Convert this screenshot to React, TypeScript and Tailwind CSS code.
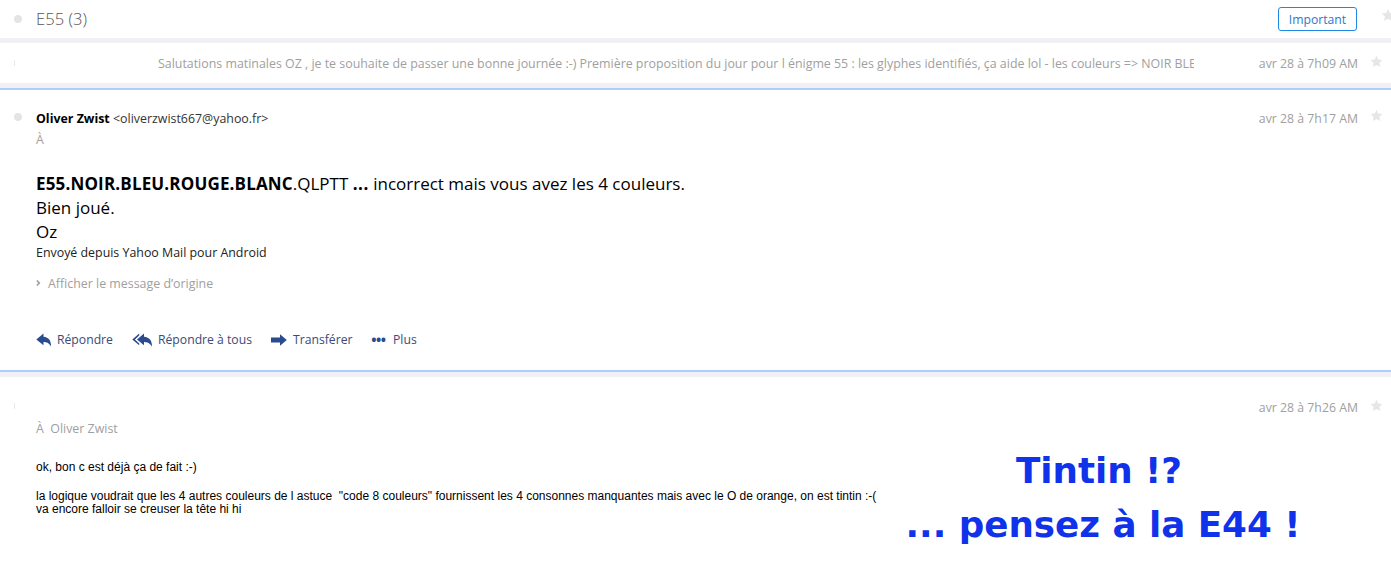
const Star = ({ className }: { className: string }) => (
  <svg viewBox="0 0 24 24" className={className} fill="#e6e6e6">
    <path d="M12 1.5l3.2 7 7.6.9-5.6 5.2 1.5 7.6L12 18.4l-6.7 3.8 1.5-7.6L1.2 9.4l7.6-.9z" />
  </svg>
);

const Dot = ({ className }: { className: string }) => (
  <span className={`block h-2 w-2 rounded-full bg-[#e4e4e4] ${className}`} />
);

const Time = ({ children }: { children: string }) => (
  <span className="text-[12.3px] leading-4 text-[#a0a0a0]">{children}</span>
);

const ReplyIcon = () => (
  <svg viewBox="0 0 16 14" className="h-[14px] w-4" fill="#2a4b8d">
    <path d="M7.5 0.5L0.3 6.4 7.5 12.2V9c3 0 5.4.8 7.6 4.4 0-6-2.4-9-7.6-9.6z" />
  </svg>
);

const ReplyAllIcon = () => (
  <svg viewBox="0 0 21 14" className="h-[14px] w-[21px]" fill="#2a4b8d">
    <path d="M12 0.5L5 6.4 12 12.2V9c3 0 5.6.8 8 4.4 0-6-2.6-9-8-9.6z" />
    <path d="M7.2 0.5L0.3 6.4 7.2 12.2v-1.8L2.9 6.4 7.2 2.5z" />
  </svg>
);

const ForwardIcon = () => (
  <svg viewBox="0 0 16 12" className="h-3 w-4" fill="#2a4b8d">
    <path d="M0 3.6h9V0.2L15.8 6 9 11.8V8.4H0z" />
  </svg>
);

const Action = ({ icon, label, className }: { icon: React.ReactNode; label: string; className: string }) => (
  <div className={`flex items-center ${className}`}>
    {icon}
    <span className="text-[12.2px] leading-4 text-[#3b4a78]">{label}</span>
  </div>
);

export default function App() {
  return (
    <div className="h-[587px] w-[1391px] overflow-hidden bg-white font-['Open_Sans',sans-serif]">
      {/* subject */}
      <div className="flex h-[38px] items-center pl-[14px]">
        <Dot className="mr-[14px]" />
        <h1 className="flex-1 text-[16.6px] font-light leading-5 text-[#555]">E55 (3)</h1>
        <button className="mr-[24px] h-6 w-[79px] rounded-[3px] border border-[#1e88e5] pt-[2px] text-[12.2px] text-[#2f78c8]">
          Important
        </button>
        <Star className="mb-[8px] mr-[-4px] h-[14px] w-[14px] shrink-0" />
      </div>
      <div className="h-[5px] bg-[#f0f0f5]" />

      {/* collapsed message */}
      <div className="flex h-[40px] items-center pl-[14px] pr-[8px] pt-[2px]">
        <span className="mb-[2px] mr-[143px] block h-[6px] w-px bg-[#e8e8e8]" />
        <p className="w-[1036px] overflow-hidden whitespace-nowrap text-[12.4px] leading-4 text-[#a0a0a0]">
          Salutations matinales OZ , je te souhaite de passer une bonne journée :-) Première proposition du jour pour l énigme 55 : les glyphes identifiés, ça aide lol - les couleurs =&gt; NOIR BLEU ROUGE BLANC
        </p>
        <div className="ml-auto flex items-center gap-[12px]">
          <Time>avr 28 à 7h09 AM</Time>
          <Star className="mb-[6px] h-[13px] w-[13px]" />
        </div>
      </div>
      <div className="h-[5px] bg-[#f0f0f5]" />

      {/* open message */}
      <div className="h-[284px] border-y-2 border-[#b0ccf8] pl-[14px] pr-[8px]">
        <div className="flex pt-[21px]">
          <Dot className="mr-[14px] mt-[2px]" />
          <div className="flex-1 text-[12.4px] leading-4">
            <b className="text-black">Oliver Zwist</b>{" "}
            <span className="text-[#333]">&lt;oliverzwist667@yahoo.fr&gt;</span>
          </div>
          <div className="flex items-start gap-[12px]">
            <Time>avr 28 à 7h17 AM</Time>
            <Star className="mt-[-2px] h-[13px] w-[13px]" />
          </div>
        </div>
        <div className="pl-[22px]">
          <p className="mt-[5px] text-[12.4px] leading-4 text-[#a0a0a0]">À</p>
          <div className="mt-[24px] text-[17px] leading-[24px] text-black">
            <p>
              <b className="tracking-[0.16px]">E55.NOIR.BLEU.ROUGE.BLANC</b>.QLPTT{" "}
              <b className="tracking-[0.5px]">...</b> incorrect mais vous avez les 4 couleurs.
            </p>
            <p>Bien joué.</p>
            <p>Oz</p>
          </div>
          <p className="mt-px text-[12.4px] leading-4 text-[#222]">Envoyé depuis Yahoo Mail pour Android</p>
          <div className="mt-[15px] flex items-center gap-[7px] text-[12.4px] leading-4 text-[#a0a0a0]">
            <svg viewBox="0 0 6 8" className="mb-[2px] h-2 w-[5px]" fill="none" stroke="#999" strokeWidth="1.8">
              <path d="M1 1l3 3-3 3" />
            </svg>
            Afficher le message d’origine
          </div>
          <div className="mt-[40px] flex">
            <Action icon={<ReplyIcon />} label="Répondre" className="w-[96px] gap-[5px]" />
            <Action icon={<ReplyAllIcon />} label="Répondre à tous" className="w-[139px] gap-[5px]" />
            <Action icon={<ForwardIcon />} label="Transférer" className="w-[100px] gap-[6px]" />
            <Action
              icon={<span className="w-[15px] text-center text-[14px] font-bold leading-4 tracking-[-0.5px] text-[#2a4b8d]">•••</span>}
              label="Plus"
              className="gap-[7px]"
            />
          </div>
        </div>
      </div>
      <div className="h-[5px] bg-[#f0f0f5]" />

      {/* last message */}
      <div className="pl-[14px] pr-[8px]">
        <div className="flex pt-[23px]">
          <span className="mr-auto mt-[3px] block h-[6px] w-px bg-[#e8e8e8]" />
          <div className="flex items-start gap-[12px]">
            <Time>avr 28 à 7h26 AM</Time>
            <Star className="mt-[-1px] h-[13px] w-[13px]" />
          </div>
        </div>
        <p className="mt-[5px] pl-[22px] text-[12.4px] leading-4 text-[#a0a0a0]">À&nbsp; Oliver Zwist</p>
        <div className="flex pl-[22px]">
          <div className="w-[862px] pt-[24px] font-['Liberation_Sans',sans-serif] text-[12px] leading-[13px] text-black">
            <p>ok, bon c est déjà ça de fait :-)</p>
            <p className="mt-[16px] whitespace-nowrap">
              la logique voudrait que les 4 autres couleurs de l astuce&nbsp; "code 8 couleurs" fournissent les 4 consonnes manquantes mais avec le O de orange, on est tintin :-(
            </p>
            <p>va encore falloir se creuser la tête hi hi</p>
          </div>
          <div className="mt-[7px] w-[410px] text-center font-['DejaVu_Sans',sans-serif] text-[35.7px] font-bold leading-[54px] text-[#0f32ea]">
            <p className="pr-[8px]">Tintin !?</p>
            <p>... pensez à la E44 !</p>
          </div>
        </div>
      </div>
    </div>
  );
}
